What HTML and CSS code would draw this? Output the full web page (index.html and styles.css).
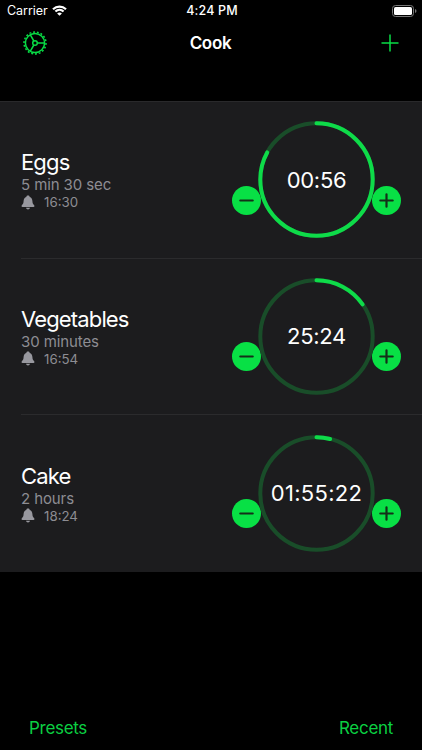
FILE: index.html
```
<!DOCTYPE html>
<html lang="en">
<head>
<meta charset="utf-8">
<title>Cook</title>
<link rel="stylesheet" href="styles.css">
</head>
<body>
<svg width="0" height="0" class="defs" aria-hidden="true">
  <symbol id="bell" viewBox="0 0 14 15"><path d="M7 .6C6 .6 5.500 1.100 5.300 1.900C3.500 2.400 2.700 4 2.600 6C2.500 8.200 2 9 1 10C.2 10.900.4 12 1.500 12H12.500C13.600 12 13.800 10.900 13 10C12 9 11.500 8.200 11.400 6C11.300 4 10.500 2.400 8.700 1.900C8.500 1.100 8 .6 7 .6ZM5 12.800C5.300 14 6 14.500 7 14.500S8.700 14 9 12.800Z"/></symbol>
  <symbol id="minus" viewBox="0 0 29 29"><path d="M8.300 14.500H20.700"/></symbol>
  <symbol id="plus" viewBox="0 0 29 29"><path d="M8.300 14.500H20.700M14.500 8.300V20.700"/></symbol>
</svg>
<div class="screen">
  <header>
    <div class="status">
      <div class="carrier"><span>Carrier</span>
        <svg class="wifi" width="15" height="11" viewBox="0 0 15 11"><path d="M1 4.200C4.700.7 10.300.7 14 4.200M3.400 6.500C5.800 4.300 9.200 4.300 11.600 6.500"/><path class="dot" d="M5.100 8.400Q7.500 6.500 9.900 8.400L7.500 10.800Z"/></svg>
      </div>
      <span class="clock">4:24 PM</span>
      <svg class="battery" width="25" height="12" viewBox="0 0 25 12"><rect class="shell" x=".5" y=".5" width="21" height="11" rx="3"/><rect class="charge" x="2" y="2" width="18" height="8" rx="1.600"/><path class="cap" d="M23 4Q24.500 4.500 24.500 6T23 8Z"/></svg>
    </div>
    <nav>
      <svg class="gear" width="26" height="26" viewBox="-13 -13 26 26"><circle r="9.600"/><circle class="teeth" r="11" pathLength="36"/><circle r="2.300"/><path d="M2.300 0H9.600M-1.150-2L-4.800-8.300M-1.150 2L-4.800 8.300"/></svg>
      <h1>Cook</h1>
      <svg class="add" width="18" height="18" viewBox="0 0 18 18"><path d="M.5 9H17.500M9 .5V17.500"/></svg>
    </nav>
  </header>
  <main>
    <section class="timer">
      <div class="info"><h2>Eggs</h2><p class="length">5 min 30 sec</p><p class="alarm"><svg class="bell"><use href="#bell"/></svg><span>16:30</span></p></div>
      <div class="dial">
        <svg class="step"><use href="#minus"/></svg>
        <div class="ring"><svg viewBox="0 0 117 117"><circle class="track" cx="58.500" cy="58.500" r="56.200"/><circle class="progress" cx="58.500" cy="58.500" r="56.200" pathLength="100" stroke-dasharray="83 100"/></svg><span>00:56</span></div>
        <svg class="step"><use href="#plus"/></svg>
      </div>
    </section>
    <section class="timer">
      <div class="info"><h2>Vegetables</h2><p class="length">30 minutes</p><p class="alarm"><svg class="bell"><use href="#bell"/></svg><span>16:54</span></p></div>
      <div class="dial">
        <svg class="step"><use href="#minus"/></svg>
        <div class="ring"><svg viewBox="0 0 117 117"><circle class="track" cx="58.500" cy="58.500" r="56.200"/><circle class="progress" cx="58.500" cy="58.500" r="56.200" pathLength="100" stroke-dasharray="15.300 100"/></svg><span>25:24</span></div>
        <svg class="step"><use href="#plus"/></svg>
      </div>
    </section>
    <section class="timer">
      <div class="info"><h2>Cake</h2><p class="length">2 hours</p><p class="alarm"><svg class="bell"><use href="#bell"/></svg><span>18:24</span></p></div>
      <div class="dial">
        <svg class="step"><use href="#minus"/></svg>
        <div class="ring"><svg viewBox="0 0 117 117"><circle class="track" cx="58.500" cy="58.500" r="56.200"/><circle class="progress" cx="58.500" cy="58.500" r="56.200" pathLength="100" stroke-dasharray="3.900 100"/></svg><span class="long">01:55:22</span></div>
        <svg class="step"><use href="#plus"/></svg>
      </div>
    </section>
  </main>
  <footer><span>Presets</span><span>Recent</span></footer>
</div>
</body>
</html>
```
FILE: styles.css
```
* { box-sizing: border-box; }
body { margin: 0; background: #000; color: #fff; font-family: Inter, "Liberation Sans", sans-serif; }
h1, h2, p { margin: 0; font-weight: 400; }
svg { display: block; flex: none; }
.defs { position: absolute; }
.screen { width: 422px; height: 750px; display: flex; flex-direction: column; overflow: hidden; }
header { height: 101px; }
.status { height: 21px; padding: 0 5px 0 7px; display: grid; grid-template-columns: 1fr auto 1fr; align-items: center; font-size: 12.5px; }
.carrier { display: flex; align-items: center; gap: 4px; letter-spacing: -.05px; }
.wifi { fill: none; stroke: #fff; stroke-width: 2.2; }
.wifi .dot { fill: #fff; stroke: none; }
.clock { font-weight: 500; letter-spacing: .15px; }
.battery { justify-self: end; }
.shell { fill: none; stroke: #777; }
.charge { fill: #fff; }
.cap { fill: #777; }
nav { height: 44px; padding: 0 23px 0 22px; display: grid; grid-template-columns: 1fr auto 1fr; align-items: center; }
h1 { font-size: 17px; font-weight: 600; letter-spacing: -.3px; }
.gear, .add { fill: none; stroke: #08dc45; stroke-width: 1.5; }
.gear .teeth { stroke-width: 1.500; stroke-dasharray: 1 1; }
.add { justify-self: end; }
main { background: #1c1c1e; height: 471px; display: grid; grid-template-rows: repeat(3, 1fr); border-top: 1px solid #29292b; }
.timer { margin-left: 21px; padding-right: 21px; display: flex; justify-content: space-between; align-items: center; border-bottom: 1px solid #2b2b2d; }
.timer:last-child { border-bottom-color: transparent; }
.info { padding-top: 0; }
h2 { font-size: 22px; line-height: 27px; letter-spacing: -.85px; }
.length { font-size: 15px; line-height: 18px; color: #8d8d93; letter-spacing: -.1px; }
.alarm { display: flex; align-items: center; gap: 9px; font-size: 13.3px; line-height: 16px; color: #8d8d93; }
.bell { width: 14px; height: 15px; fill: #98989f; }
.dial { display: flex; align-items: center; }
.step { width: 29px; height: 29px; border-radius: 50%; background: #08e045; fill: none; stroke: #143019; stroke-width: 2.200; stroke-linecap: round; margin-top: 41px; }
.ring { width: 117px; height: 117px; margin: 0 -3px; display: grid; place-items: center; }
.ring svg, .ring span { grid-area: 1 / 1; }
.ring svg { width: 117px; height: 117px; transform: rotate(-90deg); fill: none; stroke-width: 4; }
.track { stroke: #194d29; }
.progress { stroke: #0edb49; stroke-linecap: round; }
.ring span { font-size: 22px; letter-spacing: -.3px; }
.ring span.long { letter-spacing: .3px; }
footer { margin-top: auto; height: 44px; padding: 0 29px; display: flex; justify-content: space-between; align-items: center; color: #0bcf42; font-size: 17px; letter-spacing: -.3px; }
```
